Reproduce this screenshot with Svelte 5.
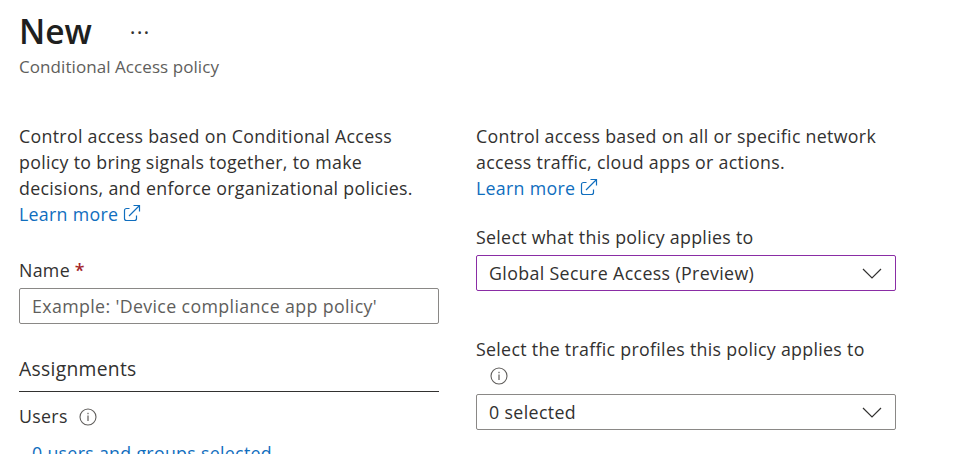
<script>
</script>

{#snippet extIcon()}
  <svg class="ext" viewBox="0 0 18 18" aria-hidden="true">
    <path d="M6.500 4.500H3.500A2 2 0 0 0 1.500 6.500V14.500A2 2 0 0 0 3.500 16.500H11.500A2 2 0 0 0 13.500 14.500V11.500" fill="none" stroke="currentColor" stroke-width="1.200"/>
    <path d="M6 12L16.500 1.500M10.500 1.500H16.500V7.500" fill="none" stroke="currentColor" stroke-width="1.200"/>
  </svg>
{/snippet}

{#snippet info()}
  <svg class="info" viewBox="0 0 18 18" aria-hidden="true">
    <circle cx="9" cy="9" r="8" fill="none" stroke="#605e5c" stroke-width="1.100"/>
    <rect x="8.400" y="7.500" width="1.200" height="5.500" fill="#605e5c"/>
    <rect x="8.400" y="4.800" width="1.200" height="1.400" fill="#605e5c"/>
  </svg>
{/snippet}

{#snippet chevron()}
  <svg class="chev" viewBox="0 0 20 11" aria-hidden="true">
    <path d="M1 1L10 10L19 1" fill="none" stroke="#323130" stroke-width="1.200"/>
  </svg>
{/snippet}

<div class="page">
  <header class="head">
    <div class="title-row">
      <h1>New</h1>
      <span class="dots">···</span>
    </div>
    <div class="sub">Conditional Access policy</div>
  </header>

  <div class="cols">
    <section class="col">
      <p>Control access based on Conditional Access policy to bring signals together, to make decisions, and enforce organizational policies.<br /><a href="#l">Learn more {@render extIcon()}</a></p>

      <div class="label name-label">Name <span class="req">*</span></div>
      <div class="field placeholder">Example: 'Device compliance app policy'</div>

      <h2>Assignments</h2>
      <div class="users">Users {@render info()}</div>
      <div class="sel-link"><a href="#u">0 users and groups selected</a></div>
    </section>

    <section class="col">
      <p>Control access based on all or specific network access traffic, cloud apps or actions.<br /><a href="#l">Learn more {@render extIcon()}</a></p>

      <div class="label applies">Select what this policy applies to</div>
      <div class="field select active">Global Secure Access (Preview) {@render chevron()}</div>

      <div class="label profiles">Select the traffic profiles this policy applies to<br /><span class="info-line">{@render info()}</span></div>
      <div class="field select">0 selected {@render chevron()}</div>
    </section>
  </div>
</div>

<style>
  :global(body) {
    margin: 0;
    background: #fff;
    overflow: hidden;
  }
  .page {
    height: 454px;
    overflow: hidden;
    padding-left: 19px;
    font-family: "Open Sans", "Noto Sans", sans-serif;
    font-size: 17.800px;
    letter-spacing: 0.3px;
    line-height: 26px;
    color: #323130;
    box-sizing: border-box;
  }
  .title-row {
    display: flex;
    align-items: center;
    height: 64px;
    margin-top: -1px;
    margin-bottom: -7px;
  }
  h1 {
    margin: 0;
    font-size: 33.500px;
    font-weight: 600;
    line-height: 64px;
    letter-spacing: 0;
    color: #201f1e;
  }
  .dots {
    margin-left: 38px;
    font-size: 22px;
    letter-spacing: 1px;
    color: #323130;
  }
  .sub {
    font-size: 17px;
    letter-spacing: 0.07px;
    line-height: 22px;
    color: #605e5c;
  }
  .cols {
    display: grid;
    grid-template-columns: 420px 420px;
    column-gap: 37px;
    margin-top: 45px;
  }
  p {
    margin: 0;
  }
  a {
    color: #106ebe;
    text-decoration: none;
  }
  .ext {
    width: 18px;
    height: 18px;
    vertical-align: -1px;
  }
  .info {
    width: 18px;
    height: 18px;
    vertical-align: -3px;
  }
  .label {
    color: #323130;
  }
  .name-label {
    margin-top: 30px;
    margin-bottom: 5px;
  }
  .req {
    color: #a4262c;
    font-weight: 600;
  }
  .field {
    box-sizing: border-box;
    height: 36px;
    border: 1px solid #8a8886;
    border-radius: 2px;
    padding: 0 12px;
    line-height: 34px;
    letter-spacing: 0.36px;
  }
  .placeholder {
    color: #605e5c;
  }
  h2 {
    margin: 27px 0 0;
    font-size: 19.300px;
    font-weight: 400;
    line-height: 36px;
    padding-bottom: 4px;
    border-bottom: 1px solid #323130;
  }
  .users {
    margin-top: 11px;
  }
  .users .info {
    margin-left: 6px;
  }
  .sel-link {
    margin-top: 11px;
    padding-left: 13px;
  }
  .applies {
    margin-top: 23px;
    margin-bottom: 5px;
  }
  .select {
    display: flex;
    align-items: center;
    justify-content: space-between;
  }
  .active {
    border-color: #8a2da5;
  }
  .chev {
    width: 20px;
    height: 11px;
    margin-right: 1px;
  }
  .profiles {
    margin-top: 45px;
    margin-bottom: 6px;
  }
  .info-line {
    padding-left: 14px;
  }
</style>
